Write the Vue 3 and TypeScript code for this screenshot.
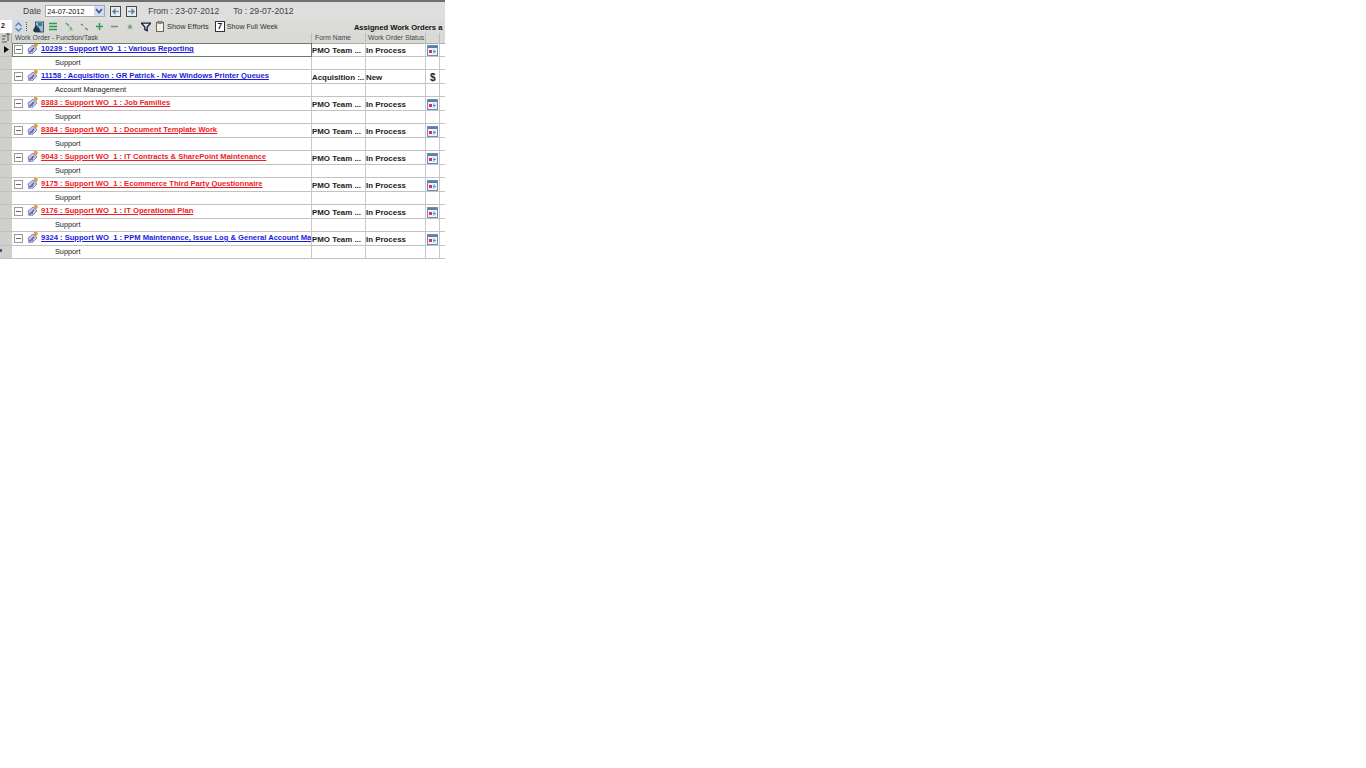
<script setup lang="ts">
interface Row { title: string; sub: string; form: string; status: string; color: string; icon: string }
const pmo = 'PMO Team ...'
const rows: Row[] = [
  { title: '10239 : Support WO\u00a0 1 : Various Reporting', sub: 'Support', form: pmo, status: 'In Process', color: 'blue', icon: 'cal' },
  { title: '11158 : Acquisition : GR Patrick - New Windows Printer Queues', sub: 'Account Management', form: 'Acquisition :..', status: 'New', color: 'blue', icon: 'dollar' },
  { title: '8383 : Support WO\u00a0 1 : Job Families', sub: 'Support', form: pmo, status: 'In Process', color: 'red', icon: 'cal' },
  { title: '8384 : Support WO\u00a0 1 : Document Template Work', sub: 'Support', form: pmo, status: 'In Process', color: 'red', icon: 'cal' },
  { title: '9043 : Support WO\u00a0 1 : IT Contracts & SharePoint Maintenance', sub: 'Support', form: pmo, status: 'In Process', color: 'red', icon: 'cal' },
  { title: '9175 : Support WO\u00a0 1 : Ecommerce Third Party Questionnaire', sub: 'Support', form: pmo, status: 'In Process', color: 'red', icon: 'cal' },
  { title: '9176 : Support WO\u00a0 1 : IT Operational Plan', sub: 'Support', form: pmo, status: 'In Process', color: 'red', icon: 'cal' },
  { title: '9324 : Support WO\u00a0 1 : PPM Maintenance, Issue Log & General Account Ma', sub: 'Support', form: pmo, status: 'In Process', color: 'blue', icon: 'cal' },
]
</script>

<template>
  <div class="app">
    <div class="datebar">
      <span class="lbl date-lbl">Date</span>
      <div class="datebox">
        <span>24-07-2012</span>
        <span class="drop"><svg width="8" height="6" viewBox="0 0 8 6"><path d="M1 1 4 4.500 7 1" fill="none" stroke="#3d5a9c" stroke-width="1.800"/></svg></span>
      </div>
      <button class="nav"><svg width="9" height="9" viewBox="0 0 9 9"><path d="M8 4.500H3" stroke="#7f94ad" stroke-width="1.500"/><path d="M4.500 1 1 4.500 4.500 8z" fill="#5f7fa6"/></svg></button>
      <button class="nav nav2"><svg width="9" height="9" viewBox="0 0 9 9"><path d="M1 4.500h5" stroke="#7f94ad" stroke-width="1.500"/><path d="M4.500 1 8 4.500 4.500 8z" fill="#5f7fa6"/></svg></button>
      <span class="lbl from">From : 23-07-2012</span>
      <span class="lbl to">To : 29-07-2012</span>
    </div>

    <div class="toolbar">
      <span class="num">2</span>
      <span class="spin">
        <svg width="9" height="12" viewBox="0 0 9 12"><path d="M1.500 5 4.500 2 7.500 5M1.500 7l3 3 3-3" fill="none" stroke="#5b82b5" stroke-width="1.400"/></svg>
      </span>
      <span class="dots"></span>
      <svg class="ti ti-sheet" width="11" height="12" viewBox="0 0 11 12"><rect x="2.500" y="1" width="8" height="10" fill="#9dbccb" stroke="#3a5a70"/><path d="M0 9l3-5 3 3 2 4H1z" fill="#1c3a4a"/><rect x="5" y="2" width="4" height="3" fill="#2f7f8f"/></svg>
      <svg class="ti ti-lines" width="8" height="9" viewBox="0 0 8 9"><path d="M0 1.500h8M0 4.500h8M0 7.500h8" stroke="#2a9d48" stroke-width="1.500"/></svg>
      <svg class="ti ti-tree" width="8" height="9" viewBox="0 0 8 9"><path d="M1 1 4 4M5 5l2 3" stroke="#5f9f70" stroke-width="1.500"/><path d="M3 8h5" stroke="#9ac7a6"/></svg>
      <svg class="ti ti-tree2" width="8" height="9" viewBox="0 0 8 9"><path d="M1 2 3 3.500M5 6l3 2" stroke="#5b8f78" stroke-width="1.500"/></svg>
      <svg class="ti ti-plus" width="7" height="7" viewBox="0 0 7 7"><path d="M3.500 0v7M0 3.500h7" stroke="#2f9a55" stroke-width="1.500"/></svg>
      <svg class="ti ti-minus" width="7" height="7" viewBox="0 0 7 7"><path d="M0 3.500h7" stroke="#6f8f80" stroke-width="1.500"/></svg>
      <svg class="ti ti-star" width="6" height="7" viewBox="0 0 7 7"><path d="M3.500 0 4.500 2.500 7 3 5 4.500 5.500 7 3.500 5.500 1.500 7 2 4.500 0 3 2.500 2.500z" fill="#6f9f86"/></svg>
      <svg class="ti ti-filter" width="10" height="10" viewBox="0 0 11 10"><path d="M.5.800h10L6.800 5v4L4.200 7.800V5z" fill="#e8e8f0" stroke="#17233f" stroke-width="1.500"/></svg>
      <svg class="ti ti-clip" width="8" height="11" viewBox="0 0 8 11"><rect x=".5" y="1.500" width="7" height="9" fill="#f3efe4" stroke="#666"/><rect x="2" y="0" width="4" height="2.500" fill="#a88" stroke="#555" stroke-width=".5"/></svg>
      <span class="tb-text efforts">Show Efforts</span>
      <span class="seven">7</span>
      <span class="tb-text week">Show Full Week</span>
      <span class="assigned">Assigned Work Orders a</span>
    </div>

    <div class="grid head">
      <div class="gutter corner">
        <svg width="9" height="10" viewBox="0 0 9 10"><path d="M7 0v8M5 2l2-2 2 2M1 3h4M1 6h3M1 9h5" fill="none" stroke="#555" stroke-width="1"/></svg>
      </div>
      <div class="hc hc-main">Work Order - Function/Task</div>
      <div class="hc hc-form">Form Name</div>
      <div class="hc hc-status">Work Order Status</div>
      <div class="hc"></div>
      <div class="hc last"></div>
    </div>

    <div v-for="(r, i) in rows" :key="r.title" class="record">
      <div class="grid line">
        <div class="gutter">
          <svg v-if="i === 0" width="5" height="7" viewBox="0 0 5 7"><path d="M0 0 5 3.500 0 7z" fill="#111"/></svg>
        </div>
        <div class="c main" :class="{ focus: i === 0 }">
          <span class="tog"><span></span></span>
          <svg class="wrench" width="11" height="11" viewBox="0 0 11 11">
            <path d="M1 6 6 2l4 4-5 5H2z" fill="#b9c8ee" stroke="#5f78c8" stroke-width=".8"/>
            <path d="M2.500 9.500 7 5" stroke="#4a5fc0" stroke-width="1.500"/>
            <path d="M7 0h3l1 2-2 3-2-2z" fill="#e9a030"/>
            <path d="M4 7h2v2H4z" fill="#d9534f"/>
          </svg>
          <span class="title" :class="r.color">{{ r.title }}</span>
        </div>
        <div class="c val">{{ r.form }}</div>
        <div class="c val">{{ r.status }}</div>
        <div class="c ic">
          <svg v-if="r.icon === 'cal'" width="11" height="11" viewBox="0 0 11 11">
            <rect x=".5" y=".5" width="10" height="10" fill="#eef2fa" stroke="#6f8db4"/>
            <rect x="1" y="1" width="9" height="2" fill="#5a7faf"/>
            <rect x="2" y="5" width="3" height="3" fill="#d8305a"/>
            <path d="M7 4.500v4M6 6.500h3" stroke="#6a8ab8"/>
          </svg>
          <span v-else class="dollar">$</span>
        </div>
        <div class="c end"></div>
      </div>
      <div class="grid line sub">
        <div class="gutter">
          <span v-if="i === rows.length - 1" class="mark"></span>
        </div>
        <div class="c main subtext">{{ r.sub }}</div>
        <div class="c"></div>
        <div class="c"></div>
        <div class="c"></div>
        <div class="c end"></div>
      </div>
    </div>
  </div>
</template>

<style scoped>
.app {
  width: 445px;
  height: 261px;
  overflow: hidden;
  font-family: "Liberation Sans", Arial, sans-serif;
  color: #111;
  background: #fff;
}
.datebar {
  height: 20px;
  display: flex;
  align-items: center;
  background: #dedede;
  border-top: 2px solid #6f6f6f;
  box-sizing: border-box;
  font-size: 8.600px;
}
.lbl { color: #444; white-space: nowrap; }
.date-lbl { margin-left: 23px; }
.datebox {
  margin-left: 4px;
  width: 60px;
  height: 12px;
  box-sizing: border-box;
  background: #fff;
  border: 1px solid #a8aab0;
  display: flex;
  align-items: center;
  justify-content: space-between;
  font-size: 7.300px;
  padding-left: 1px;
}
.drop {
  width: 10px; height: 10px;
  background: #d4dcf0;
  display: flex; align-items: center; justify-content: center;
}
.nav {
  width: 11px; height: 11px; padding: 0;
  margin-left: 5px;
  border: 1px solid #4a4a4a;
  background: #e9ebf2;
  display: flex; align-items: center; justify-content: center;
  box-sizing: border-box;
}
.nav2 { margin-left: 5px; }
.from { margin-left: 11px; }
.to { margin-left: 14px; }
.toolbar {
  height: 13px;
  display: flex;
  align-items: center;
  background: #dadad6;
  font-size: 7.400px;
  white-space: nowrap;
  overflow: hidden;
}
.num {
  width: 12px; height: 13px;
  background: #fff;
  font-size: 7px; font-weight: bold;
  line-height: 12px;
  padding-left: 1px;
  box-sizing: border-box;
}
.spin {
  width: 11px; height: 13px;
  margin-left: 1px;
  background: #d2d9e6;
  display: flex; align-items: center; justify-content: center;
}
.dots { width: 1px; height: 9px; margin-left: 2px; border-left: 1px dotted #555; box-sizing: border-box; }
.ti { flex: none; }
.ti-sheet { margin-left: 6px; }
.ti-lines { margin-left: 5px; }
.ti-tree { margin-left: 8px; }
.ti-tree2 { margin-left: 7px; }
.ti-plus { margin-left: 8px; }
.ti-minus { margin-left: 8px; }
.ti-star { margin-left: 9px; }
.ti-filter { margin-left: 8px; }
.ti-clip { margin-left: 5px; }
.tb-text { color: #333; }
.efforts { margin-left: 3px; }
.week { margin-left: 2px; font-size: 7.100px; }
.seven {
  margin-left: 6px;
  width: 10px; height: 11px;
  border: 1px solid #333;
  box-sizing: border-box;
  font-size: 9px; font-weight: bold; line-height: 9px;
  text-align: center;
  background: #fff;
  color: #17233f;
}
.assigned {
  margin-left: 76px;
  padding-top: 2px;
  font-weight: bold;
  font-size: 7.600px;
  color: #111;
}
.grid {
  display: grid;
  grid-template-columns: 12px 300px 54px 60px 14px 5px;
}
.head { height: 10px; background: #d9d9d6; }
.gutter {
  background: #cfcfcb;
  display: flex; align-items: center; justify-content: center;
  border-bottom: 1px solid #c0c0bc;
  box-sizing: border-box;
  position: relative;
}
.corner { border-right: 1px solid #aaa; }
.mark {
  position: absolute;
  left: 0; top: 3px;
  width: 2px; height: 3px;
  background: #3a5a90;
}
.hc {
  font-size: 6.800px;
  color: #444;
  line-height: 9px;
  white-space: nowrap;
  overflow: hidden;
  border-right: 1px solid #bbb;
  border-bottom: 1px solid #aaa;
  box-sizing: border-box;
}
.hc-main { padding-left: 3px; }
.hc-form { padding-left: 3px; }
.hc-status { padding-left: 2px; }
.hc.last { border-right: 0; }
.line { height: 14px; }
.line.sub { height: 13px; }
.c {
  border-right: 1px solid #c9c6cc;
  border-bottom: 1px solid #c2c2c2;
  box-sizing: border-box;
  overflow: hidden;
  white-space: nowrap;
  display: flex;
  align-items: center;
  min-width: 0;
}
.c.end { border-right: 0; }
.main { padding-left: 2px; }
.focus { outline: 1px solid #6a7a6a; outline-offset: -1px; }
.tog {
  width: 7px; height: 7px;
  border: 1px solid #9a9a9a;
  display: flex; align-items: center; justify-content: center;
  flex: none;
}
.tog span { width: 5px; height: 1px; background: #666; }
.wrench { margin-left: 4px; margin-bottom: 2px; flex: none; }
.title {
  margin-left: 3px;
  padding-bottom: 2px;
  font-size: 7.600px;
  font-weight: bold;
  text-decoration: underline;
  white-space: nowrap;
}
.title.blue { color: #1a1ae0; }
.title.red { color: #ee1c25; }
.val { font-size: 7.900px; font-weight: bold; padding: 2px 0 0; color: #222; }
.ic { justify-content: flex-start; padding: 1px 0 0 1px; }
.dollar { font-size: 10px; font-weight: bold; color: #222; padding-left: 3px; }
.subtext { font-size: 7.300px; padding: 0 0 1px 43px; color: #222; }
</style>

<style>
html, body { background: #fff; }
</style>
